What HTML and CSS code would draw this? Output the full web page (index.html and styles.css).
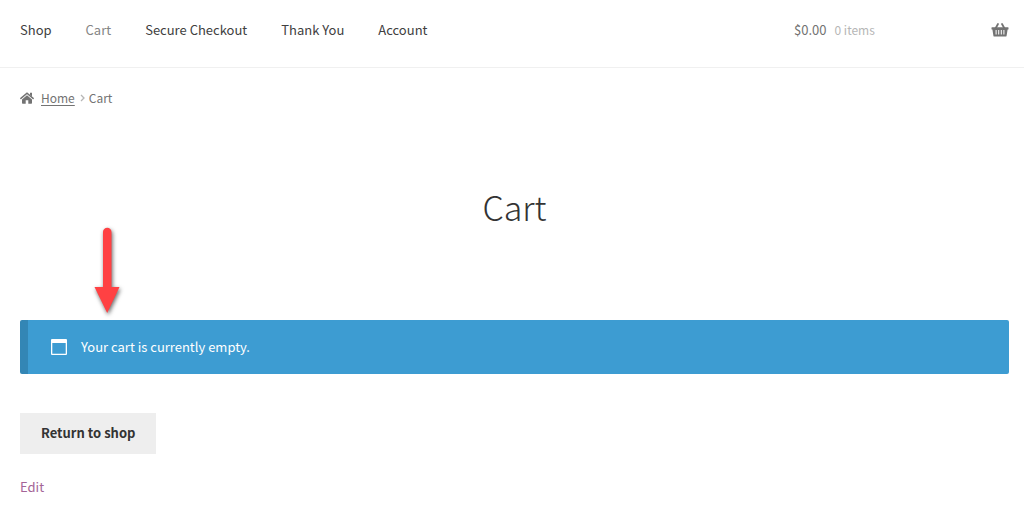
FILE: index.html
```html
<!DOCTYPE html>
<html lang="en">
<head>
  <meta charset="UTF-8" />
  <meta name="viewport" content="width=device-width, initial-scale=1.0"/>
  <title>Cart</title>
  <link rel="stylesheet" href="styles.css">
</head>
<body>

  <header class="site-header">
    <nav class="main-nav">
      <a href="#">Shop</a>
      <a href="#" class="current">Cart</a>
      <a href="#">Secure Checkout</a>
      <a href="#">Thank You</a>
      <a href="#">Account</a>
    </nav>
    <a href="#" class="cart-contents">
      <span class="amount">$0.00</span>
      <span class="count">0 items</span>
      <svg class="basket-icon" viewBox="0 0 18 16" width="18" height="16" aria-hidden="true">
        <path d="M4.5 6.5 7 2M13.5 6.5 11 2" fill="none" stroke="currentColor" stroke-width="1.8" stroke-linecap="round"/>
        <path fill="currentColor" fill-rule="evenodd" d="M1 5.200h16q.5 0 .5.5v1.200q0 .6-.6.6h-.3l-1 6.200q-.1.900-1.100.9h-11q-1 0-1.100-.9l-1-6.200h-.3q-.6 0-.6-.6V5.700q0-.5.5-.5zM4.600 8v4.500h1V8zM7.200 8v4.500h1V8zM9.800 8v4.500h1V8zM12.400 8v4.500h1V8z"/>
      </svg>
    </a>
  </header>

  <div class="container">
    <nav class="breadcrumb">
      <svg class="home-icon" viewBox="0 0 14 12" width="14" height="12" aria-hidden="true">
        <path fill="none" stroke="currentColor" stroke-width="1.5" stroke-linecap="round" d="M.9 6.4 7 1.2l6.100 5.200"/>
        <path fill="currentColor" d="M10 .8h2v3.600l-2-1.700zM7 3.300l5 4.200V11q0 .7-.7.7H8.300V8.300H5.700v3.400h-3q-.7 0-.7-.7V7.500z"/>
      </svg>
      <a href="#">Home</a>
      <svg class="separator" viewBox="0 0 5 8" width="5" height="8" aria-hidden="true">
        <path d="M1 1l3 3-3 3" fill="none" stroke="currentColor" stroke-width="1.300"/>
      </svg>
      <span>Cart</span>
    </nav>

    <h1 class="page-title">Cart</h1>

    <div class="notice">
      <svg class="notice-icon" viewBox="0 0 16 16" width="16" height="16" aria-hidden="true">
        <path fill="currentColor" fill-rule="evenodd" d="M1 0h14q1 0 1 1v14q0 1-1 1H1q-1 0-1-1V1q0-1 1-1zM1.300 4v10.700h13.400V4z"/>
      </svg>
      <span>Your cart is currently empty.</span>
      <svg class="arrow" viewBox="0 0 36 96" width="36" height="96" aria-hidden="true">
        <path fill="#ff4143" d="M14 8a4 4 0 0 1 8.500 0v55h8L18.200 89 5.500 63H14z"/>
      </svg>
    </div>

    <button class="btn" type="button">Return to shop</button>

    <a href="#" class="edit-link">Edit</a>
  </div>

</body>
</html>
```

FILE: styles.css
```css
* { box-sizing: border-box; }
body {
  margin: 0;
  font-family: "Noto Sans CJK SC", "Open Sans", sans-serif;
  font-size: 13px;
  line-height: 24px;
  background: #fff;
  color: #737373;
}

.site-header {
  display: flex;
  justify-content: space-between;
  align-items: center;
  padding: 18px 15px 25px 20px;
  border-bottom: 1px solid #f0f0f0;
}

.main-nav {
  display: flex;
  gap: 34px;
}

.main-nav a {
  color: #404040;
  text-decoration: none;
}

.main-nav .current {
  color: #858585;
}

.cart-contents {
  display: flex;
  align-items: center;
  gap: 8px;
  width: 215px;
  color: #737373;
  text-decoration: none;
}

.count {
  color: #b6b6b6;
  font-size: 12px;
}

.basket-icon {
  margin-left: auto;
}

.container {
  padding: 0 15px 20px 20px;
}

.breadcrumb {
  display: flex;
  align-items: center;
  padding-top: 18px;
  font-size: 12px;
}

.breadcrumb a {
  margin-left: 7px;
  color: #737373;
  text-underline-offset: 2px;
}

.separator {
  margin: 0 4px 0 5px;
  color: #b6b6b6;
}

.page-title {
  margin: 70px 0 87px;
  font-size: 34px;
  font-weight: 300;
  line-height: 53px;
  text-align: center;
  color: #333;
}

.notice {
  position: relative;
  display: flex;
  align-items: center;
  gap: 14px;
  padding: 15px 23px;
  border-left: 8px solid #3386b5;
  border-radius: 2px;
  background: #3d9cd2;
  color: #fff;
}

/* pointer above the notice */
.arrow {
  position: absolute;
  left: 61px;
  bottom: 100%;
  filter: drop-shadow(1px 2px 2px rgba(0,0,0,0.6));
}

.btn {
  display: block;
  margin: 39px 0 21px;
  padding: 8px 21px 9px;
  border: none;
  background: #eee;
  color: #333;
  font-family: inherit;
  font-size: 13px;
  font-weight: 600;
  line-height: 24px;
  cursor: pointer;
}

.edit-link {
  color: #a46497;
  text-decoration: none;
}
```
